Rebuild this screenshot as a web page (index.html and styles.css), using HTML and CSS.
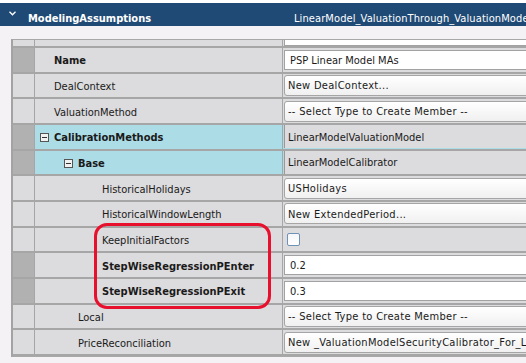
FILE: index.html
```html
<!DOCTYPE html>
<html>
<head>
<meta charset="utf-8">
<link rel="stylesheet" href="styles.css">
</head>
<body>
<div class="header">
  <svg class="chev" width="7" height="5" viewBox="0 0 7 5"><path d="M0.5 0.8 L3.5 3.8 L6.5 0.8" fill="none" stroke="#fff" stroke-width="1.3"/></svg>
  <span class="title">ModelingAssumptions</span>
  <span class="path">LinearModel_ValuationThrough_ValuationModel</span>
</div>
<div class="panel">
  <div class="grid">
    <div class="row top"><div class="rh"></div><div class="nm"></div><div class="vl"><div class="inp cut"></div></div></div>
    <div class="row sel"><div class="rh"></div><div class="nm b l0">Name</div><div class="vl"><div class="inp">PSP Linear Model MAs</div></div></div>
    <div class="row"><div class="rh"></div><div class="nm l0">DealContext</div><div class="vl"><div class="dd">New DealContext...</div></div></div>
    <div class="row"><div class="rh"></div><div class="nm l0">ValuationMethod</div><div class="vl"><div class="dd">-- Select Type to Create Member --</div></div></div>
    <div class="row sel blue"><div class="rh"></div><div class="nm b lb0"><span class="mbox"></span>CalibrationMethods</div><div class="vl"><div class="ro">LinearModelValuationModel</div></div></div>
    <div class="row sel blue"><div class="rh"></div><div class="nm b lb1"><span class="mbox"></span>Base</div><div class="vl"><div class="ro">LinearModelCalibrator</div></div></div>
    <div class="row"><div class="rh"></div><div class="nm l2">HistoricalHolidays</div><div class="vl"><div class="dd">USHolidays</div></div></div>
    <div class="row"><div class="rh"></div><div class="nm l2">HistoricalWindowLength</div><div class="vl"><div class="dd">New ExtendedPeriod...</div></div></div>
    <div class="row"><div class="rh"></div><div class="nm l2">KeepInitialFactors</div><div class="vl"><span class="chk"></span></div></div>
    <div class="row sel"><div class="rh"></div><div class="nm b l2">StepWiseRegressionPEnter</div><div class="vl"><div class="inp">0.2</div></div></div>
    <div class="row sel"><div class="rh"></div><div class="nm b l2">StepWiseRegressionPExit</div><div class="vl"><div class="inp">0.3</div></div></div>
    <div class="row"><div class="rh"></div><div class="nm l1">Local</div><div class="vl"><div class="dd">-- Select Type to Create Member --</div></div></div>
    <div class="row"><div class="rh"></div><div class="nm l1">PriceReconciliation</div><div class="vl"><div class="dd">New _ValuationModelSecurityCalibrator_For_LinearModel</div></div></div>
  </div>
  <div class="highlight"></div>
</div>
</body>
</html>
```
FILE: styles.css
```css
html, body {
  margin: 0;
  padding: 0;
  width: 526px;
  height: 363px;
  overflow: hidden;
  background: #ffffff;
  font-family: "DejaVu Sans Condensed", "DejaVu Sans", sans-serif;
  font-size: 11px;
  color: #1a1a1a;
}
.header {
  margin-top: 3px;
  height: 23px;
  box-sizing: border-box;
  padding-top: 7px;
  background: #1f4a75;
  color: #fff;
  display: flex;
  align-items: center;
  white-space: nowrap;
  overflow: hidden;
}
.chev {
  margin-left: 9px;
  margin-right: 12px;
  margin-top: -9px;
  flex: none;
}
.title {
  font-weight: bold;
  width: 266px;
  flex: none;
}
.path {
  flex: none;
  letter-spacing: 0.1px;
}
.panel {
  position: relative;
  background: #f4f2f5;
  height: 337px;
  padding-top: 13px;
  box-sizing: border-box;
}
.grid {
  margin-left: 11px;
  width: 600px;
  border-left: 2px solid #a3a3a3;
  border-top: 1px solid #a8a8a8;
  border-bottom: 1px solid #a8a8a8;
}
.row {
  display: grid;
  grid-template-columns: 22px 248px 1fr;
  height: 25.67px;
  box-sizing: border-box;
  border-bottom: 2px solid #a6a6a6;
  background: #dcdbdd;
}
.row.top {
  height: 8px;
  overflow: hidden;
}
.rh {
  border-right: 1px solid #a6a6a6;
}
.row.sel .rh {
  background: #b1b1b1;
}
.nm {
  display: flex;
  align-items: center;
  padding-top: 2px;
  white-space: nowrap;
  border-right: 1px solid #a6a6a6;
}
.b { font-weight: bold; }
.l0 { padding-left: 19px; }
.l1 { padding-left: 43px; }
.l2 { padding-left: 67px; }
.lb0 { padding-left: 5px; }
.lb1 { padding-left: 29px; }
.blue .nm { background: #acdce6; }
.mbox {
  width: 7px;
  height: 7px;
  border: 1px solid #555;
  background: #f2f2f2;
  margin-right: 5px;
  position: relative;
  flex: none;
}
.mbox::after {
  content: "";
  position: absolute;
  left: 1px;
  right: 1px;
  top: 3px;
  height: 1px;
  background: #333;
}
.blue .vl { background: #acdce6; }
.vl {
  display: flex;
  align-items: center;
  padding-left: 1px;
  white-space: nowrap;
  overflow: hidden;
}
.inp {
  flex: 1;
  height: 20px;
  box-sizing: border-box;
  background: #fff;
  border: 1px solid #a2a2a2;
  padding-left: 5px;
  padding-top: 1px;
  display: flex;
  align-items: center;
}
.inp.cut {
  margin-top: -14px;
}
.dd {
  flex: 1;
  height: 21px;
  box-sizing: border-box;
  background: linear-gradient(#ffffff, #f0f0f0);
  border: 1px solid #a5a5a5;
  border-radius: 3px;
  padding-left: 3px;
  padding-top: 1px;
  display: flex;
  align-items: center;
  letter-spacing: 0.3px;
}
.ro {
  flex: 1;
  height: 23px;
  box-sizing: border-box;
  background: #dcdbdd;
  border-left: 1px solid #999;
  padding-left: 3px;
  padding-top: 1px;
  display: flex;
  align-items: center;
}
.chk {
  width: 13px;
  height: 13px;
  box-sizing: border-box;
  border: 1px solid #6f93b6;
  border-radius: 2px;
  background: linear-gradient(#f4f6f9, #ffffff);
  margin-left: 3px;
}
.highlight {
  position: absolute;
  left: 94px;
  top: 197px;
  width: 177px;
  height: 86px;
  box-sizing: border-box;
  border: 3px solid #e8112d;
  border-radius: 13px;
}
```
